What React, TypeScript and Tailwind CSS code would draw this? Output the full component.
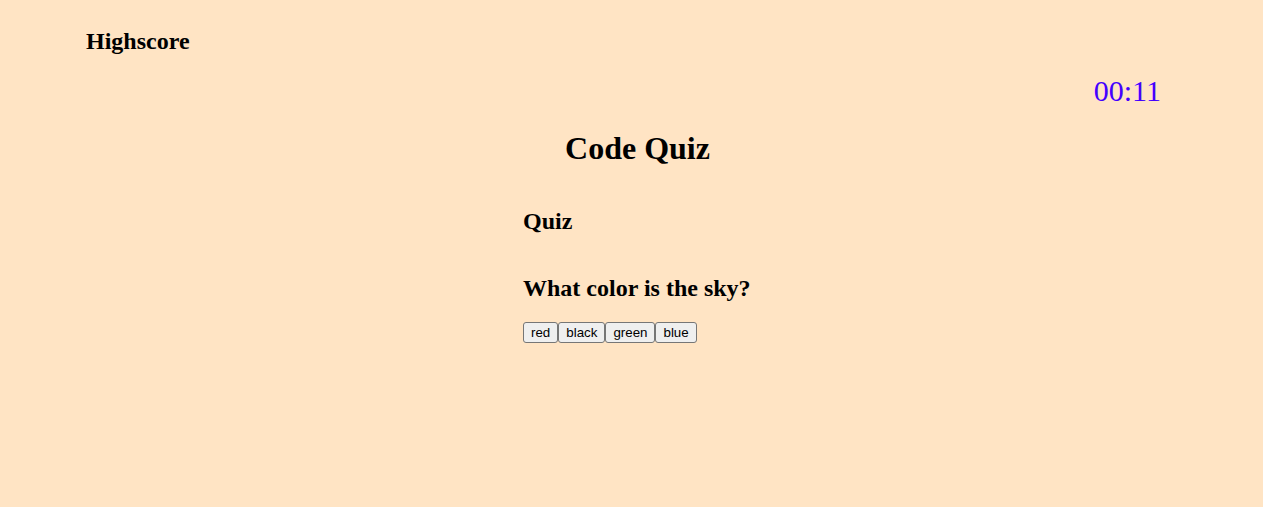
import { useState } from "react";

const choices = ["red", "black", "green", "blue"];

export default function App() {
  const [picked, setPicked] = useState<string | null>(null);

  return (
    <div className="min-h-[507px] w-full bg-[#ffe4c4] font-['Liberation_Serif',serif] text-black">
      <header className="pl-[86px] pt-[29px]">
        <h2 className="text-[24px] leading-[24px] font-bold">Highscore</h2>
      </header>

      <div className="mt-[23px] flex justify-end pr-[102px]">
        <span className="text-[30px] leading-[30px] text-[#4400ff]">00:11</span>
      </div>

      <h1 className="mt-[26px] pl-3 text-center text-[32px] leading-[32px] font-bold">
        Code Quiz
      </h1>

      <section className="mt-[45px] pl-[523px]">
        <h2 className="text-[24px] leading-[24px] font-bold">Quiz</h2>
        <h2 className="mt-[43px] text-[24px] leading-[24px] font-bold">
          What color is the sky?
        </h2>
        <div className="mt-[22px] flex">
          {choices.map((c) => (
            <button
              key={c}
              onClick={() => setPicked(c)}
              className={`rounded-[3px] border border-[#767676] px-[7px] py-[2px] font-['Liberation_Sans',Arial,sans-serif] text-[13.33px] leading-[15px] ${
                picked === c ? "bg-[#e0e0e0]" : "bg-[#efefef]"
              }`}
            >
              {c}
            </button>
          ))}
        </div>
      </section>
    </div>
  );
}
